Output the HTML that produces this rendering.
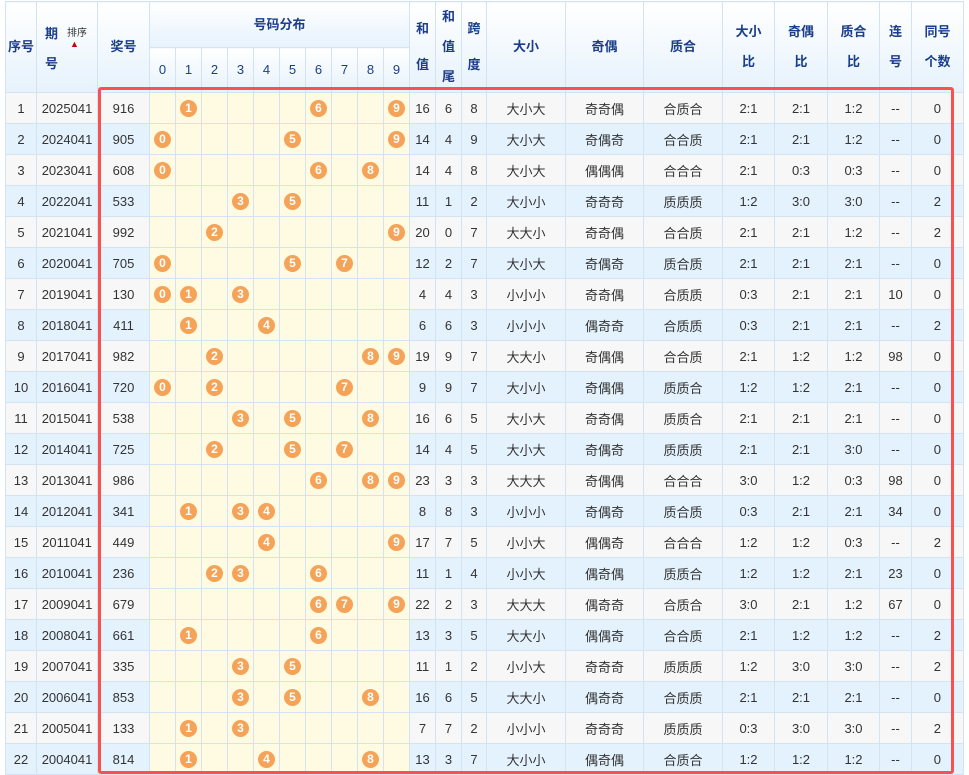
<!DOCTYPE html>
<html><head><meta charset="utf-8">
<style>
body{margin:0;background:#fff;width:969px;height:775px;overflow:hidden;position:relative;font-family:"Liberation Sans","Noto Sans CJK SC",sans-serif;}
table{position:absolute;left:5px;top:1px;border-collapse:collapse;table-layout:fixed;font-size:13px;color:#333}
td,th{border:1px solid #d3e3f1;text-align:center;padding:0;overflow:hidden;white-space:nowrap}
th{background:linear-gradient(#fff,#e6f2fc);color:#1b3d8a;font-weight:bold;font-size:13px;line-height:30px}
th.n{font-weight:normal;font-size:13px;color:#1b3d8a}
tr.d td{height:30px}
tr.o td{background:#f7f7f7}
tr.e td{background:#e4f2fd}
tr.d td.b{background:#fffbe3}
.ball{display:inline-block;width:17px;height:17px;border-radius:50%;background:#f4a358;color:#fff;font-weight:bold;font-size:12px;line-height:17px;vertical-align:middle}
#red{position:absolute;left:98px;top:87px;width:850px;height:681px;border:3.5px solid #fb5050;border-radius:3px}
</style></head><body>
<table id="t">
<colgroup><col style="width:31px"><col style="width:61px"><col style="width:52px">
<col style="width:26px"><col style="width:26px"><col style="width:26px"><col style="width:26px"><col style="width:26px"><col style="width:26px"><col style="width:26px"><col style="width:26px"><col style="width:26px"><col style="width:26px">
<col style="width:26px"><col style="width:26px"><col style="width:25px"><col style="width:79px"><col style="width:78px"><col style="width:79px"><col style="width:52px"><col style="width:53px"><col style="width:52px"><col style="width:32px"><col style="width:52px"></colgroup>
<tr style="height:45px"><th rowspan="2">序号</th><th rowspan="2" style="position:relative"><span style="position:absolute;left:8px;top:24px;line-height:16px">期</span><span style="position:absolute;left:8px;top:54px;line-height:16px">号</span><span style="position:absolute;left:30px;top:26px;font-size:10px;line-height:12px;font-weight:normal;color:#333">排序</span><span style="position:absolute;left:33px;top:38px;color:#c00;font-size:9px;line-height:9px">▲</span></th><th rowspan="2">奖号</th><th colspan="10">号码分布</th>
<th rowspan="2" style="line-height:36px">和<br>值</th><th rowspan="2">和<br>值<br>尾</th><th rowspan="2" style="line-height:36px">跨<br>度</th><th rowspan="2">大小</th><th rowspan="2">奇偶</th><th rowspan="2">质合</th><th rowspan="2" style="line-height:30px">大小<br>比</th><th rowspan="2" style="line-height:30px">奇偶<br>比</th><th rowspan="2" style="line-height:30px">质合<br>比</th><th rowspan="2" style="line-height:30px">连<br>号</th><th rowspan="2" style="line-height:30px">同号<br>个数</th></tr>
<tr style="height:44px"><th class="n">0</th><th class="n">1</th><th class="n">2</th><th class="n">3</th><th class="n">4</th><th class="n">5</th><th class="n">6</th><th class="n">7</th><th class="n">8</th><th class="n">9</th></tr>
</table>
<div id="red"></div>
<script>
var D=[
"2025041 916 16 6 8 大小大 奇奇偶 合质合 2:1 2:1 1:2 -- 0",
"2024041 905 14 4 9 大小大 奇偶奇 合合质 2:1 2:1 1:2 -- 0",
"2023041 608 14 4 8 大小大 偶偶偶 合合合 2:1 0:3 0:3 -- 0",
"2022041 533 11 1 2 大小小 奇奇奇 质质质 1:2 3:0 3:0 -- 2",
"2021041 992 20 0 7 大大小 奇奇偶 合合质 2:1 2:1 1:2 -- 2",
"2020041 705 12 2 7 大小大 奇偶奇 质合质 2:1 2:1 2:1 -- 0",
"2019041 130 4 4 3 小小小 奇奇偶 合质质 0:3 2:1 2:1 10 0",
"2018041 411 6 6 3 小小小 偶奇奇 合质质 0:3 2:1 2:1 -- 2",
"2017041 982 19 9 7 大大小 奇偶偶 合合质 2:1 1:2 1:2 98 0",
"2016041 720 9 9 7 大小小 奇偶偶 质质合 1:2 1:2 2:1 -- 0",
"2015041 538 16 6 5 大小大 奇奇偶 质质合 2:1 2:1 2:1 -- 0",
"2014041 725 14 4 5 大小大 奇偶奇 质质质 2:1 2:1 3:0 -- 0",
"2013041 986 23 3 3 大大大 奇偶偶 合合合 3:0 1:2 0:3 98 0",
"2012041 341 8 8 3 小小小 奇偶奇 质合质 0:3 2:1 2:1 34 0",
"2011041 449 17 7 5 小小大 偶偶奇 合合合 1:2 1:2 0:3 -- 2",
"2010041 236 11 1 4 小小大 偶奇偶 质质合 1:2 1:2 2:1 23 0",
"2009041 679 22 2 3 大大大 偶奇奇 合质合 3:0 2:1 1:2 67 0",
"2008041 661 13 3 5 大大小 偶偶奇 合合质 2:1 1:2 1:2 -- 2",
"2007041 335 11 1 2 小小大 奇奇奇 质质质 1:2 3:0 3:0 -- 2",
"2006041 853 16 6 5 大大小 偶奇奇 合质质 2:1 2:1 2:1 -- 0",
"2005041 133 7 7 2 小小小 奇奇奇 质质质 0:3 3:0 3:0 -- 2",
"2004041 814 13 3 7 大小小 偶奇偶 合质合 1:2 1:2 1:2 -- 0"];
var h="";
D.forEach(function(s,i){var a=s.split(" ");h+='<tr class="d '+(i%2?'e':'o')+'"><td>'+(i+1)+'</td><td>'+a[0]+'</td><td>'+a[1]+'</td>';
for(var k=0;k<10;k++){h+='<td class="b">'+(a[1].indexOf(k)>=0?'<span class="ball">'+k+'</span>':'')+'</td>';}
for(var j=2;j<a.length;j++){h+='<td'+(j==12?' style="text-align:right;padding-right:22px"':'')+'>'+a[j]+'</td>';}
h+='</tr>';});
document.getElementById('t').insertAdjacentHTML('beforeend',h);
</script>
</body></html>
